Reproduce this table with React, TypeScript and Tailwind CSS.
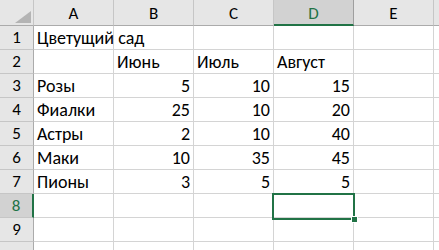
import React from "react"

const cols = ["A", "B", "C", "D", "E"]

// sheet contents, row by row (A..E)
const rows: (string | number | null)[][] = [
  ["Цветущий сад", null, null, null, null],
  [null, "Июнь", "Июль", "Август", null],
  ["Розы", 5, 10, 15, null],
  ["Фиалки", 25, 10, 20, null],
  ["Астры", 2, 10, 40, null],
  ["Маки", 10, 35, 45, null],
  ["Пионы", 3, 5, 5, null],
  [null, null, null, null, null],
  [null, null, null, null, null],
  [null, null, null, null, null],
]

const activeCol = 3
const activeRow = 8

export default function App() {
  return (
    <div
      className="relative w-[439px] h-[250px] overflow-hidden bg-white text-[18px] leading-[20px] text-black"
      style={{ fontFamily: "Carlito, 'Liberation Sans Narrow', 'Liberation Sans', sans-serif" }}
    >
      <div className="grid grid-cols-[34px_80px_80px_80px_80px_80px_1fr] grid-rows-[26px_repeat(10,24px)]">
        {/* corner */}
        <div className="relative bg-[#e6e6e6] border-r border-b border-r-[#c6c6c6] border-b-[#ababab]">
          <svg className="absolute left-[15px] top-[11px]" width="16" height="12" viewBox="0 0 16 12">
            <polygon points="16,0 16,12 0,12" fill="#b4b4b4" />
          </svg>
        </div>
        {cols.map((c, i) => (
          <div
            key={c}
            className={
              i === activeCol
                ? "flex items-center justify-center pt-[4px] text-[17px] bg-[#d2d2d2] text-[#217346] border-r border-r-[#9f9f9f] border-b-2 border-b-[#217346]"
                : "flex items-center justify-center pt-[3px] text-[17px] bg-[#e6e6e6] border-r border-r-[#c6c6c6] border-b border-b-[#ababab]"
            }
          >
            {c}
          </div>
        ))}
        <div className="bg-[#e6e6e6] border-b border-b-[#ababab]" />

        {rows.map((r, ri) => (
          <React.Fragment key={ri}>
            <div
              className={
                ri + 1 === activeRow
                  ? "flex items-end justify-center pb-[1px] text-[17px] bg-[#d2d2d2] text-[#217346] border-r-2 border-r-[#217346] border-b border-b-[#c6c6c6]"
                  : "flex items-end justify-center pb-[1px] text-[17px] bg-[#e6e6e6] border-r border-r-[#ababab] border-b border-b-[#c6c6c6]"
              }
            >
              {ri < 9 ? ri + 1 : null}
            </div>
            {r.map((v, ci) => (
              <div
                key={ci}
                className={
                  "flex items-end whitespace-nowrap pb-[1px] border-r border-b border-[#d4d4d4] " +
                  (typeof v === "number" ? "justify-end pr-[3px]" : "pl-[3px]")
                }
              >
                {v}
              </div>
            ))}
            <div className="border-b border-[#d4d4d4]" />
          </React.Fragment>
        ))}
      </div>

      {/* active cell D8 */}
      <div className="absolute left-[272px] top-[193px] w-[83px] h-[27px] border-2 border-[#217346]" />
      <div className="absolute left-[351px] top-[216px] w-[7px] h-[7px] bg-[#217346] border border-white" />
    </div>
  )
}
